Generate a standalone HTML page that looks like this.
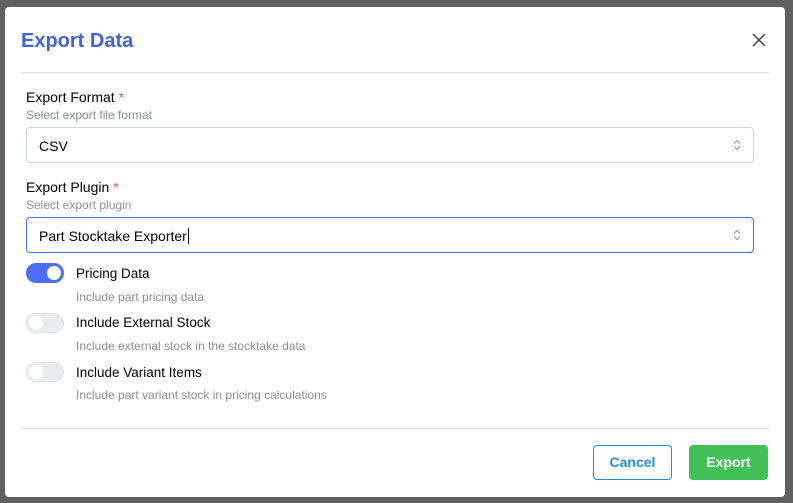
<!DOCTYPE html>
<html><head><style>
*{box-sizing:border-box;margin:0;padding:0}
body{width:793px;height:503px;background:#606060;font-family:"Liberation Sans",Arial,sans-serif;position:relative;overflow:hidden}
.m{position:absolute;left:5px;top:7px;width:780px;height:490px;background:#fff;border-radius:4px}
.a{position:absolute}
.t{left:16px;top:23px;font-size:20px;font-weight:bold;color:#4263d6}
.hr{left:16px;width:748px;height:1px;background:#dee2e6}
.lab{font-size:14px;color:#000}
.lab span{color:#fa5252}
.d{font-size:12px;color:#8a8f96}
.sel{left:21px;width:728px;height:36px;border:1px solid #ced4da;border-radius:4px;font-size:14px;padding:10px 0 0 12px;color:#000}
.sel svg{position:absolute;right:12px;top:11px}
.tg{left:21px;width:38px;height:20px;border-radius:10px;background:#e9ecef;border:1px solid #dee2e6}
.tg i{position:absolute;left:2px;top:2px;width:14px;height:14px;border-radius:50%;background:#fff}
.on{background:#4c6ef5;border-color:#4c6ef5}
.on i{left:auto;right:2px}
.btn{top:438px;width:79px;height:35px;border-radius:4px;font-size:14px;font-weight:bold;text-align:center;line-height:33px}
</style></head><body>
<div class="m">
<div class="a t">Export Data</div>
<svg class="a" style="left:747px;top:26px" width="14" height="14" viewBox="0 0 14 14"><path d="M1 1L13 13M13 1L1 13" stroke="#444" stroke-width="1.5"/></svg>
<div class="a hr" style="top:65px"></div>
<div class="a lab" style="left:21px;top:82px">Export Format <span>*</span></div>
<div class="a d" style="left:21px;top:101px">Select export file format</div>
<div class="a sel" style="top:120px">CSV<svg width="8" height="12" viewBox="0 0 8 12"><path d="M1 4.5L4 1.5L7 4.5M1 7.5L4 10.5L7 7.5" fill="none" stroke="#868e96" stroke-width="1"/></svg></div>
<div class="a lab" style="left:21px;top:172px">Export Plugin <span>*</span></div>
<div class="a d" style="left:21px;top:191px">Select export plugin</div>
<div class="a sel" style="top:210px;border-color:#4c6ef5">Part Stocktake Exporter<span style="border-left:1px solid #000;margin-left:1px"></span><svg width="8" height="12" viewBox="0 0 8 12"><path d="M1 4.5L4 1.5L7 4.5M1 7.5L4 10.5L7 7.5" fill="none" stroke="#868e96" stroke-width="1"/></svg></div>
<div class="a tg on" style="top:256px"><i></i></div>
<div class="a lab" style="left:71px;top:259px;font-size:13.5px">Pricing Data</div>
<div class="a d" style="left:71px;top:283px">Include part pricing data</div>
<div class="a tg" style="top:306px"><i></i></div>
<div class="a lab" style="left:71px;top:308px;font-size:13.5px">Include External Stock</div>
<div class="a d" style="left:71px;top:332px">Include external stock in the stocktake data</div>
<div class="a tg" style="top:355px"><i></i></div>
<div class="a lab" style="left:71px;top:358px;font-size:13.5px">Include Variant Items</div>
<div class="a d" style="left:71px;top:381px">Include part variant stock in pricing calculations</div>
<div class="a hr" style="top:421px"></div>
<div class="a btn" style="left:588px;border:1px solid #228be6;color:#228be6">Cancel</div>
<div class="a btn" style="left:684px;background:#40c057;color:#fff;line-height:35px">Export</div>
</div>
</body></html>
